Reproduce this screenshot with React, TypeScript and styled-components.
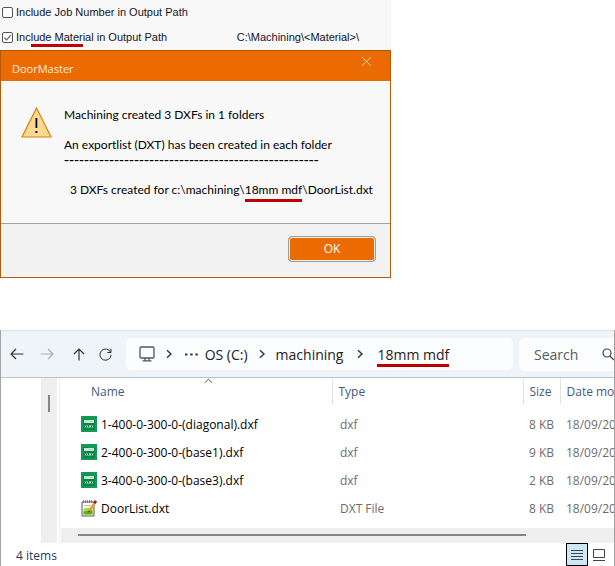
import React from 'react';
import styled, { createGlobalStyle } from 'styled-components';

const GlobalStyle = createGlobalStyle`
  *, *::before, *::after { box-sizing: border-box; }
  body { margin: 0; background: #fff; }
  body, button, input { font-family: 'Open Sans', 'Noto Sans', sans-serif; }
`;

const Page = styled.main`
  display: flex;
  flex-direction: column;
  overflow: hidden;
`;

/* ---------- Output settings ---------- */

const Settings = styled.section`
  width: 100%;
  max-width: 391px;
  background: #f8f8f8;
  font: 11px/25px 'Liberation Sans', Arial, sans-serif;
  color: #14142a;
`;

const SettingRow = styled.div`
  display: flex;
  align-items: center;
  justify-content: space-between;
  height: 25px;
  padding: 0 32px 0 2px;
`;

const Option = styled.label`
  display: flex;
  align-items: center;
  gap: 3px;
  white-space: nowrap;
`;

const Tick = styled.input`
  appearance: none;
  width: 11px;
  height: 11px;
  margin: 0;
  border: 1px solid #555;
  border-radius: 2px;
  background: #fff;
  &:checked {
    background: #fff
      url("data:image/svg+xml,%3Csvg xmlns='http://www.w3.org/2000/svg' viewBox='0 0 9 9'%3E%3Cpath d='M1.3 4.6 3.6 6.8 7.8 2.2' fill='none' stroke='%23666' stroke-width='1.2'/%3E%3C/svg%3E");
  }
`;

const Marked = styled.span<{ $drop: number }>`
  position: relative;
  &::after {
    content: '';
    position: absolute;
    left: 0;
    right: 0;
    bottom: -${(p) => p.$drop}px;
    height: 3px;
    background: #c00000;
  }
`;

/* ---------- Message dialog ---------- */

const Dialog = styled.section`
  width: 100%;
  max-width: 391px;
  border: 1px solid #b05a0a;
  background: #f8f8f8;
  font-size: 12px;
  color: #000;
`;

const TitleBar = styled.header`
  display: flex;
  align-items: flex-start;
  justify-content: space-between;
  height: 30px;
  padding: 0 18px 0 11px;
  background: #eb6b00;
  color: #fdeee0;
`;

const Title = styled.h1`
  margin: 10px 0 0;
  font-size: 11px;
  line-height: 16px;
  font-weight: 400;
`;

const CloseButton = styled.button`
  display: flex;
  margin: 5px 0 0;
  padding: 0;
  border: 0;
  background: none;
  color: #ffd9b5;
`;

const Message = styled.div`
  display: flex;
  gap: 12px;
  padding: 26px 12px 26px 20px;
`;

const Warning = styled.svg`
  flex: none;
`;

const Lines = styled.div`
  display: flex;
  flex-direction: column;
  font-family: Lato, 'Open Sans', sans-serif;
  line-height: 15px;
  white-space: pre;
`;

const Line = styled.p<{ $before?: number; $indent?: number }>`
  margin: ${(p) => p.$before ?? 0}px 0 0;
  padding-left: ${(p) => p.$indent ?? 0}px;
`;

const DashLine = styled.p`
  margin: 0;
  font: 15px/15px 'Liberation Sans', Arial, sans-serif;
`;

const DialogFooter = styled.footer`
  display: flex;
  justify-content: flex-end;
  padding: 12px 14px 15px;
  border-top: 1px solid #a0a0a0;
  background: #f2f2f2;
`;

const OkButton = styled.button`
  width: 88px;
  height: 26px;
  padding: 0;
  border: 1px solid #9c9c9c;
  border-radius: 4px;
  background: #eb6b00;
  box-shadow: inset 0 0 0 1px #f4efe9;
  color: #fff;
  font-size: 12px;
  line-height: 22px;
`;

/* ---------- File explorer ---------- */

const Explorer = styled.section`
  margin-top: 52px;
  border: solid #a3a3a3;
  border-width: 0 1px 1px;
  overflow: hidden;
  font-size: 12px;
`;

const Toolbar = styled.nav`
  display: flex;
  align-items: center;
  height: 48px;
  padding-left: 8px;
  border-top: 1px solid #dbe3e7;
  border-bottom: 1px solid #b4c7cf;
  background: #eef4f7;
`;

const IconButton = styled.button<{ $faded?: boolean; $width?: number }>`
  flex: none;
  display: flex;
  align-items: center;
  justify-content: center;
  width: ${(p) => p.$width ?? 30}px;
  height: 26px;
  padding: 0;
  border: 0;
  background: none;
  color: ${(p) => (p.$faded ? '#a9afb3' : '#333')};
`;

const Address = styled.div`
  flex: 1;
  display: flex;
  align-items: center;
  height: 32px;
  margin-left: 4px;
  padding-left: 11px;
  border-radius: 5px;
  background: #fbfdfe;
  color: #222;
  font-size: 14px;
  white-space: nowrap;
`;

const Crumb = styled.a`
  color: inherit;
  text-decoration: none;
`;

const SearchBox = styled.label`
  flex: none;
  display: flex;
  align-items: center;
  width: 95px;
  height: 33px;
  margin-left: 6px;
  padding-left: 15px;
  border-radius: 5px 0 0 5px;
  background: #fbfdfe;
  color: #444;
`;

const SearchInput = styled.input`
  flex: 1;
  min-width: 0;
  padding: 0;
  border: 0;
  outline: 0;
  background: none;
  font-size: 14px;
  &::placeholder { color: #555b60; opacity: 1; }
`;

const Body = styled.div`
  display: flex;
`;

const TreePane = styled.aside`
  flex: none;
  display: flex;
  justify-content: flex-end;
  width: 59px;
  padding-right: 2px;
  border-right: 1px solid #f0f0f0;
`;

const VerticalTrack = styled.div`
  display: flex;
  justify-content: center;
  width: 16px;
  padding-top: 17px;
  background: #efefef;
`;

const VerticalThumb = styled.div`
  width: 2px;
  height: 17px;
  background: #858585;
`;

const Files = styled.div`
  flex: 1;
  min-width: 0;
  padding-left: 1px;
`;

const FileTable = styled.table`
  width: 100%;
  table-layout: fixed;
  border-collapse: collapse;
  margin-bottom: 6px;
`;

const NameCol = styled.col` width: 271px; `;
const TypeCol = styled.col` width: 191px; `;
const SizeCol = styled.col` width: 37px; `;

const HeadCell = styled.th<{ $indent: number }>`
  position: relative;
  height: 26px;
  padding: 0 0 0 ${(p) => p.$indent}px;
  border-right: 1px solid #e0e3e6;
  color: #465a7d;
  font-weight: 400;
  text-align: left;
  white-space: nowrap;
  overflow: hidden;
  &:last-child { border-right: 0; }
`;

const SortMark = styled.svg`
  position: absolute;
  top: 0;
  left: 143px;
`;

const Row = styled.tr`
  height: 28px;
  tbody &:first-child { height: 34px; }
  tbody &:first-child td { padding-top: 6px; }
`;

const Cell = styled.td<{ $indent: number; $strong?: boolean }>`
  padding: 0 0 0 ${(p) => p.$indent}px;
  color: ${(p) => (p.$strong ? '#000' : '#6d6d6d')};
  white-space: nowrap;
  overflow: hidden;
`;

const SizeCell = styled(Cell)`
  padding-right: 6px;
  text-align: right;
`;

const FileName = styled.span`
  display: flex;
  align-items: center;
  gap: 4px;
`;

const HorizontalTrack = styled.div`
  height: 15px;
  padding: 6px 88px 0 17px;
  background: #efefef;
`;

const HorizontalThumb = styled.div`
  height: 2px;
  background: #858585;
`;

const StatusBar = styled.footer`
  display: flex;
  align-items: center;
  height: 23px;
  padding: 0 4px 0 15px;
  color: #1f3a63;
`;

const ItemCount = styled.span`
  flex: 1;
  padding-top: 2px;
`;

const ViewButton = styled.button<{ $active?: boolean }>`
  display: flex;
  align-items: center;
  justify-content: center;
  width: 22px;
  height: 23px;
  padding: 0;
  border: ${(p) => (p.$active ? '1px solid #000' : '0')};
  background: ${(p) => (p.$active ? '#cce8f6' : 'none')};
`;

/* ---------- Drawings ---------- */

const stroke = { fill: 'none', stroke: 'currentColor', strokeWidth: 1.2 };

const Chevron = () => (
  <svg width="8" height="10" viewBox="0 0 8 10" {...stroke} strokeWidth={1.4}>
    <path d="M2 1.2 6 5 2 8.8" />
  </svg>
);

const SheetIcon = () => (
  <svg width="16" height="16" viewBox="0 0 16 16">
    <rect width="16" height="16" fill="#119c55" />
    <path d="M2 3h5l1 1h6v10H2z" fill="#0b8345" />
    <rect x="3" y="4" width="10" height="3" fill="#c4e8d5" />
    <path d="M4 9.5l1.2 2m0-2-1.2 2M6.5 9.3v2h1.2M8.5 9.5h1v1.8h-1zM10.8 9.5l1.2 2m0-2-1.2 2" stroke="#d9f2e4" strokeWidth=".7" fill="none" />
  </svg>
);

const NoteIcon = () => (
  <svg width="16" height="17" viewBox="0 0 16 17">
    <path d="M1 2h12v14H1z" fill="#fff" stroke="#555" />
    <path d="M2.5 8.5 11.5 7v7.5h-9z" fill="#a5dc4a" />
    <path d="M2.5 11.5 11.5 10v4.5h-9z" fill="#5eb012" />
    <path d="M2.5 0v3M4.5 0v3M6.5 0v3M8.5 0v3M10.5 0v3" stroke="#777" strokeWidth=".9" />
    <path d="M3 5.5h7" stroke="#bbb" />
    <path d="M8.5 11 13.7 2.6" stroke="#f0a020" strokeWidth="2.4" />
    <path d="M13.4 3.2 15 .8" stroke="#a01818" strokeWidth="2.6" />
    <path d="M7.5 12.4 7.6 10.4 9.4 11.4z" fill="#333" />
  </svg>
);

type FileItem = { name: string; type: string; size: string; note?: boolean };

const files: FileItem[] = [
  { name: '1-400-0-300-0-(diagonal).dxf', type: 'dxf', size: '8 KB' },
  { name: '2-400-0-300-0-(base1).dxf', type: 'dxf', size: '9 KB' },
  { name: '3-400-0-300-0-(base3).dxf', type: 'dxf', size: '2 KB' },
  { name: 'DoorList.dxt', type: 'DXT File', size: '8 KB', note: true },
];

export default function App() {
  return (
    <Page>
      <GlobalStyle />
      <Settings>
        <SettingRow>
          <Option>
            <Tick type="checkbox" />
            <span>Include Job Number in Output Path</span>
          </Option>
        </SettingRow>
        <SettingRow>
          <Option>
            <Tick type="checkbox" defaultChecked />
            <span>Inc<Marked $drop={4}>lude Mater</Marked>ial in Output Path</span>
          </Option>
          <span>{'C:\\Machining\\<Material>\\'}</span>
        </SettingRow>
      </Settings>

      <Dialog role="dialog" aria-labelledby="dialog-title">
        <TitleBar>
          <Title id="dialog-title">DoorMaster</Title>
          <CloseButton aria-label="Close">
            <svg width="11" height="11" viewBox="0 0 11 11" {...stroke} strokeWidth={1}>
              <path d="M1 1l9 9M10 1l-9 9" />
            </svg>
          </CloseButton>
        </TitleBar>
        <Message>
          <Warning width="31" height="31" viewBox="0 0 31 31">
            <path d="M15.5 1 30 30H1z" fill="#fadb8e" stroke="#e07b1c" strokeWidth="1.2" />
            <path d="M14.5 11h1.8v10h-1.8zM14.5 24h1.8v2h-1.8z" fill="#000" />
          </Warning>
          <Lines>
            <Line>Machining created 3 DXFs in 1 folders</Line>
            <Line $before={15}>An exportlist (DXT) has been created in each folder</Line>
            <DashLine>---------------------------------------------------</DashLine>
            <Line $before={15} $indent={6}>
              {'3 DXFs created for c:\\machining\\'}
              <Marked $drop={5}>18mm mdf</Marked>
              {'\\DoorList.dxt'}
            </Line>
          </Lines>
        </Message>
        <DialogFooter>
          <OkButton>OK</OkButton>
        </DialogFooter>
      </Dialog>

      <Explorer>
        <Toolbar aria-label="Navigation">
          <IconButton $width={16} aria-label="Back">
            <svg width="14" height="12" viewBox="0 0 14 12" {...stroke}>
              <path d="M13.5 6H1M6 1 1 6l5 5" />
            </svg>
          </IconButton>
          <IconButton $width={44} $faded aria-label="Forward">
            <svg width="14" height="12" viewBox="0 0 14 12" {...stroke}>
              <path d="M.5 6H13M8 1l5 5-5 5" />
            </svg>
          </IconButton>
          <IconButton $width={20} aria-label="Up">
            <svg width="12" height="13" viewBox="0 0 12 13" {...stroke}>
              <path d="M6 12.5V1M1 6l5-5 5 5" />
            </svg>
          </IconButton>
          <IconButton $width={33} aria-label="Refresh">
            <svg width="13" height="13" viewBox="0 0 13 13" {...stroke} strokeWidth={1}>
              <path d="M11.6 4.3A5.6 5.6 0 1 0 12.1 6.8M12 .8v3.7H8.3" />
            </svg>
          </IconButton>
          <Address>
            <IconButton $width={20} aria-label="This PC">
              <svg width="16" height="16" viewBox="0 0 16 16" fill="none" stroke="#555" strokeWidth="1.3">
                <rect x="1" y="1" width="14" height="11" rx="1.2" />
                <path d="M6 12v2.5M10 12v2.5M3.5 14.8h9" />
              </svg>
            </IconButton>
            <IconButton $width={24}><Chevron /></IconButton>
            <IconButton $width={20} aria-label="More">
              <svg width="13" height="3" viewBox="0 0 13 3" fill="currentColor">
                <path d="M0 .5h2.4v2H0zM5.2.5h2.4v2H5.2zM10.4.5h2.4v2h-2.4z" />
              </svg>
            </IconButton>
            <Crumb href="#c">&nbsp;OS (C:)</Crumb>
            <IconButton $width={28}><Chevron /></IconButton>
            <Crumb href="#machining">machining</Crumb>
            <IconButton $width={34}><Chevron /></IconButton>
            <Crumb href="#mdf"><Marked $drop={3}>18mm mdf</Marked></Crumb>
          </Address>
          <SearchBox>
            <SearchInput placeholder="Search" aria-label="Search" />
            <svg width="12" height="13" viewBox="0 0 12 13" {...stroke}>
              <circle cx="5" cy="5" r="4" />
              <path d="M7.8 8 12 12" />
            </svg>
          </SearchBox>
        </Toolbar>

        <Body>
          <TreePane>
            <VerticalTrack><VerticalThumb /></VerticalTrack>
          </TreePane>
          <Files>
            <FileTable>
              <colgroup><NameCol /><TypeCol /><SizeCol /><col /></colgroup>
              <thead>
                <tr>
                  <HeadCell $indent={30}>
                    Name
                    <SortMark width="9" height="6" viewBox="0 0 9 6" fill="none" stroke="#555">
                      <path d="M.8 4.8 4.5 1.2 8.2 4.8" />
                    </SortMark>
                  </HeadCell>
                  <HeadCell $indent={6}>Type</HeadCell>
                  <HeadCell $indent={6}>Size</HeadCell>
                  <HeadCell $indent={6}>Date modified</HeadCell>
                </tr>
              </thead>
              <tbody>
                {files.map((f) => (
                  <Row key={f.name}>
                    <Cell $indent={20} $strong>
                      <FileName>{f.note ? <NoteIcon /> : <SheetIcon />}{f.name}</FileName>
                    </Cell>
                    <Cell $indent={8}>{f.type}</Cell>
                    <SizeCell $indent={0}>{f.size}</SizeCell>
                    <Cell $indent={6}>18/09/2023</Cell>
                  </Row>
                ))}
              </tbody>
            </FileTable>
            <HorizontalTrack><HorizontalThumb /></HorizontalTrack>
          </Files>
        </Body>

        <StatusBar>
          <ItemCount>4 items</ItemCount>
          <ViewButton $active aria-label="Details view">
            <svg width="12" height="12" viewBox="0 0 12 12" stroke="#444">
              <path d="M0 1.5h12M0 4.5h12M0 7.5h12M0 10.5h12" />
            </svg>
          </ViewButton>
          <ViewButton aria-label="Large icons view">
            <svg width="12" height="12" viewBox="0 0 12 12" fill="none" stroke="#444">
              <path d="M.5.5h11v8H.5zM0 11.5h12" />
            </svg>
          </ViewButton>
        </StatusBar>
      </Explorer>
    </Page>
  );
}
